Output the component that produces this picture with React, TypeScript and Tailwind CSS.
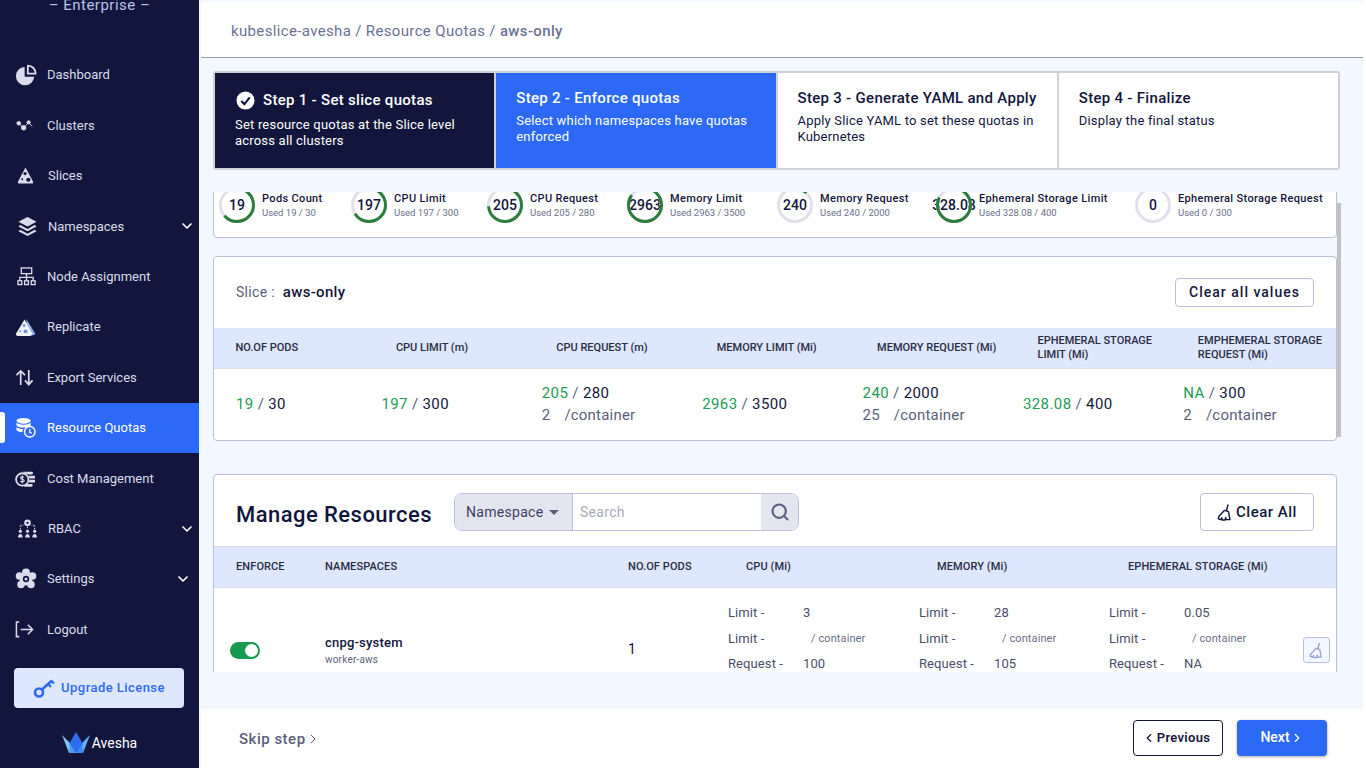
import { ChevronDown, ChevronLeft, ChevronRight, Search } from "lucide-react";

type NavItem = {
  label: string;
  icon: React.ReactNode;
  active?: boolean;
  chevron?: string;
  labelClass?: string;
};

function PieIcon() {
  return (
    <svg viewBox="0 0 24 24" className="w-[22px] h-[22px]" fill="currentColor">
      <path d="M10.5 3.2A10 10 0 1 0 21 14h-10.500Z" />
      <path d="M14 1.800a8.500 8.500 0 0 1 8.500 8.700H14Z" fill="none" stroke="currentColor" strokeWidth="2" strokeLinejoin="round" />
    </svg>
  );
}

function ClusterIcon() {
  return (
    <svg viewBox="0 0 20 12" className="w-[18px] h-[11px] ml-[1px]" fill="currentColor" stroke="currentColor">
      <path d="M3 3 8.500 9 14 2.500 18 7" fill="none" strokeWidth="1" />
      <circle cx="3" cy="3.500" r="2" />
      <circle cx="8.500" cy="8.500" r="2.500" />
      <circle cx="14" cy="2.500" r="1.800" />
    </svg>
  );
}

function SliceIcon() {
  return (
    <svg viewBox="0 0 20 20" className="w-[19px] h-[19px] ml-[1px]">
      <path d="M10 1.500 18 16.500Q18.500 18.500 16.500 18.500H3.500Q1.500 18.500 2 16.500Z" fill="currentColor" />
      <circle cx="9.500" cy="8" r="1.700" fill="#12163c" />
      <circle cx="13" cy="14.500" r="2.200" fill="#12163c" />
      <circle cx="6.500" cy="14" r="1" fill="#12163c" />
    </svg>
  );
}

function LayersIcon() {
  return (
    <svg viewBox="0 0 22 22" className="w-[21px] h-[21px] ml-[2px]" fill="currentColor">
      <path d="M11 1 20.500 6 11 11 1.500 6Z" />
      <path d="M3.500 9.500 1.500 11 11 16 20.500 11 18.500 9.500 11 13.500Z" />
      <path d="M3.500 14.500 1.500 16 11 21 20.500 16 18.500 14.500 11 18.500Z" />
    </svg>
  );
}

function NodeIcon() {
  return (
    <svg viewBox="0 0 20 20" className="w-[19px] h-[19px] ml-[2px]" fill="none" stroke="currentColor" strokeWidth="1.400">
      <rect x="4.500" y="1" width="11" height="6" />
      <path d="M10 7v4M3 14v-3h14v3M10 11v3" />
      <rect x="1" y="14.500" width="4" height="4" />
      <rect x="8" y="14.500" width="4" height="4" />
      <rect x="15" y="14.500" width="4" height="4" />
    </svg>
  );
}

function ReplicateIcon() {
  return (
    <svg viewBox="0 0 22 22" className="w-[21px] h-[21px]">
      <path d="M12 2 21 17Q21 19 19 19H12Z" fill="#8fa8e8" />
      <path d="M10 2.500 18 17Q18.500 19.500 15 20H3Q0.500 19.500 1 17.500Z" fill="#f2f4fb" />
      <circle cx="9.500" cy="9" r="1.500" fill="#6d8fe8" />
      <circle cx="11" cy="15" r="2" fill="#6d8fe8" />
      <circle cx="5.500" cy="15" r="1" fill="#6d8fe8" />
    </svg>
  );
}

function ExportIcon() {
  return (
    <svg viewBox="0 0 20 20" className="w-[19px] h-[19px]" fill="none" stroke="currentColor" strokeWidth="1.800">
      <path d="M6 18V3M1.500 7.500 6 3l4.500 4.500M14.500 2v15M10.500 13l4 4.500 4-4.500" />
    </svg>
  );
}

function QuotaIcon() {
  return (
    <svg viewBox="0 0 22 22" className="w-[21px] h-[21px]" fill="currentColor">
      <ellipse cx="9" cy="4" rx="7.500" ry="3" />
      <path d="M1.500 6v2c0 1.700 3.400 3 7.500 3s7.500-1.300 7.500-3V6c-1.500 1.400-4.300 2-7.500 2S3 7.400 1.500 6Z" />
      <path d="M1.500 10.500v2.500c0 1.500 2.700 2.600 6 2.900.2-1.200.8-2.300 1.500-3.100-3.200 0-6-.9-7.500-2.300Z" />
      <circle cx="15.500" cy="15.500" r="5.500" fill="#2b69f6" stroke="currentColor" strokeWidth="1.500" />
      <path d="M15.500 12.500v3.500l2.200 1" fill="none" stroke="currentColor" strokeWidth="1.300" />
    </svg>
  );
}

function CostIcon() {
  return (
    <svg viewBox="0 0 22 18" className="w-[20px] h-[17px]" fill="currentColor">
      <path d="M8 1.500h11a2 2 0 0 1 0 3h-4ZM15 6h6.500a1.500 1.500 0 0 1 0 3H16ZM16 10.500h5a1.500 1.500 0 0 1 0 3h-6ZM12 15h6a1.500 1.500 0 0 1 0 3h-8Z" />
      <circle cx="8" cy="10" r="6.800" fill="#12163c" stroke="currentColor" strokeWidth="2" />
      <path d="M10 7.800C9.500 6.800 6 6.500 6 8.300c0 2 4.200 1.200 4.200 3.300 0 1.800-3.700 1.600-4.300.5M8 5.500v9" fill="none" stroke="currentColor" strokeWidth="1.200" />
    </svg>
  );
}

function RbacIcon() {
  return (
    <svg viewBox="0 0 22 22" className="w-[21px] h-[21px] ml-[2px]" fill="currentColor">
      <circle cx="11" cy="5" r="3.500" />
      <circle cx="11" cy="5" r="1.200" fill="#12163c" />
      <path d="M3.500 12V7.500H7M18.500 12V7.500H15M11 9v3" fill="none" stroke="currentColor" strokeWidth="1" strokeDasharray="1.500 1" />
      <circle cx="3.500" cy="14" r="1.700" />
      <circle cx="11" cy="14" r="1.700" />
      <circle cx="18.500" cy="14" r="1.700" />
      <path d="M1 20.500c0-5 5-5 5 0ZM8.500 20.500c0-5 5-5 5 0ZM16 20.500c0-5 5-5 5 0Z" />
    </svg>
  );
}

function SettingsIcon() {
  return (
    <svg viewBox="0 0 22 22" className="w-[22px] h-[22px]" fill="currentColor">
      <circle cx="11" cy="4.500" r="4" />
      <circle cx="4.500" cy="8" r="3.800" />
      <circle cx="17.500" cy="8" r="3.800" />
      <circle cx="6" cy="16.500" r="3.800" />
      <circle cx="16" cy="16.500" r="3.800" />
      <circle cx="11" cy="11" r="6.500" />
      <circle cx="11" cy="11" r="3.200" fill="#12163c" />
      <circle cx="11" cy="11" r="1.500" />
    </svg>
  );
}

function LogoutIcon() {
  return (
    <svg viewBox="0 0 20 20" className="w-[19px] h-[19px]" fill="none" stroke="currentColor" strokeWidth="1.600">
      <path d="M4.500 2H1.500v15.500h3M6 10h12.500M13.500 5l5 5-5 5" />
    </svg>
  );
}

function KeyIcon() {
  return (
    <svg viewBox="0 0 22 22" className="w-[22px] h-[22px] text-[#2b69f6]" fill="none" stroke="currentColor">
      <circle cx="6" cy="15.500" r="4" strokeWidth="2.600" />
      <path d="M9 12.500 19 3.500" strokeWidth="2.600" />
      <path d="M15 7l3 3M18.500 4l2.500 2.500" strokeWidth="2.400" />
    </svg>
  );
}

function BroomIcon({ className }: { className: string }) {
  return (
    <svg viewBox="0 0 18 20" className={className} fill="none" stroke="currentColor" strokeWidth="1.600" strokeLinejoin="round">
      <path d="M12.500 1 10.500 8" />
      <path d="M8.500 7.500 13 9l1.500 9H9" />
      <path d="M8.500 7.500 2 14.500 1.500 17l3 1 1-2 0 2.500H9l1-3 0 3" />
    </svg>
  );
}

function AveshaCrown() {
  return (
    <svg viewBox="0 0 28 21" className="w-[28px] h-[21px]">
      <path d="M0 3 7 21H14L8 11Z" fill="#7fc4f5" />
      <path d="M28 3 21 21H14L20 11Z" fill="#5fb0f5" />
      <path d="M14 0 7 12 14 21 21 12Z" fill="#2e6df0" />
      <path d="M8 12 14 21H7Z" fill="#4d9cf0" />
      <path d="M20 12 14 21H21Z" fill="#3c86ee" />
    </svg>
  );
}

const navItems: NavItem[] = [
  { label: "Dashboard", icon: <PieIcon /> },
  { label: "Clusters", icon: <ClusterIcon /> },
  { label: "Slices", icon: <SliceIcon />, labelClass: "ml-[1px]" },
  { label: "Namespaces", icon: <LayersIcon />, labelClass: "ml-[1px]", chevron: "mr-[3px]" },
  { label: "Node Assignment", icon: <NodeIcon /> },
  { label: "Replicate", icon: <ReplicateIcon /> },
  { label: "Export Services", icon: <ExportIcon /> },
  { label: "Resource Quotas", icon: <QuotaIcon />, active: true },
  { label: "Cost Management", icon: <CostIcon /> },
  { label: "RBAC", icon: <RbacIcon />, labelClass: "ml-[1px]", chevron: "mr-[3px]" },
  { label: "Settings", icon: <SettingsIcon />, chevron: "mr-[7px]" },
  { label: "Logout", icon: <LogoutIcon /> },
];

const steps = [
  {
    title: "Step 1 - Set slice quotas",
    text: ["Set resource quotas at the Slice level", "across all clusters"],
    className: "bg-[#12163c] text-white",
    done: true,
  },
  {
    title: "Step 2 - Enforce quotas",
    text: ["Select which namespaces have quotas", "enforced"],
    className: "bg-[#2b69f6] text-white",
  },
  {
    title: "Step 3 - Generate YAML and Apply",
    text: ["Apply Slice YAML to set these quotas in", "Kubernetes"],
    className: "bg-white text-[#12163c]",
  },
  {
    title: "Step 4 - Finalize",
    text: ["Display the final status"],
    className: "bg-white text-[#12163c]",
  },
];

const stats = [
  { value: "19", pct: 19 / 30, label: "Pods Count", used: "Used 19 / 30" },
  { value: "197", pct: 197 / 300, label: "CPU Limit", used: "Used 197 / 300" },
  { value: "205", pct: 205 / 280, label: "CPU Request", used: "Used 205 / 280" },
  { value: "2963", pct: 2963 / 3500, label: "Memory Limit", used: "Used 2963 / 3500" },
  { value: "240", pct: 240 / 2000, label: "Memory Request", used: "Used 240 / 2000" },
  { value: "328.08", pct: 328.08 / 400, label: "Ephemeral Storage Limit", used: "Used 328.08 / 400" },
  { value: "0", pct: 0, label: "Ephemeral Storage Request", used: "Used 0 / 300" },
];

const quotaHeaders = [
  ["NO.OF PODS"],
  ["CPU LIMIT (m)"],
  ["CPU REQUEST (m)"],
  ["MEMORY LIMIT (Mi)"],
  ["MEMORY REQUEST (Mi)"],
  ["EPHEMERAL STORAGE", "LIMIT (Mi)"],
  ["EMPHEMERAL STORAGE", "REQUEST (Mi)"],
];

const quotaValues = [
  { used: "19", total: "30" },
  { used: "197", total: "300" },
  { used: "205", total: "280", perContainer: "2" },
  { used: "2963", total: "3500" },
  { used: "240", total: "2000", perContainer: "25" },
  { used: "328.08", total: "400" },
  { used: "NA", total: "300", perContainer: "2" },
];

const resourceColumns = [
  { limit: "3", request: "100" },
  { limit: "28", request: "105" },
  { limit: "0.05", request: "NA" },
];

function StatRing({ value, pct }: { value: string; pct: number }) {
  const circumference = 2 * Math.PI * 16.5;
  return (
    <div className="w-9 h-9 shrink-0 grid grid-cols-[36px] grid-rows-[36px] place-items-center">
      <svg viewBox="0 0 36 36" className="w-9 h-9 col-start-1 row-start-1 -rotate-90">
        <circle cx="18" cy="18" r="16.500" fill="none" stroke="#dfe0ea" strokeWidth="3" />
        <circle
          cx="18"
          cy="18"
          r="16.500"
          fill="none"
          stroke="#2a7d3a"
          strokeWidth="3"
          strokeDasharray={`${pct * circumference} ${circumference}`}
        />
      </svg>
      <span className="col-start-1 row-start-1 text-[14px] font-medium text-[#12163c] whitespace-nowrap">
        {value}
      </span>
    </div>
  );
}

function Sidebar() {
  return (
    <aside className="w-[199px] h-[768px] shrink-0 bg-[#12163c] flex flex-col overflow-hidden">
      <p className="h-[50px] -mt-[6px] mb-[6px] text-center text-[15px] tracking-[0.5px] text-[#b9c3e6]">
        – Enterprise –
      </p>
      <nav className="flex flex-col">
        {navItems.map((item) => (
          <div
            key={item.label}
            className={`h-[50.4px] flex items-center pr-[1px] ${item.active ? "bg-[#2b69f6] text-white" : "text-[#d9dcea]"}`}
          >
            <div className={`w-[5px] h-[31px] rounded-r-[3px] ${item.active ? "bg-white" : ""}`} />
            <div className="w-[42px] pl-[10px] shrink-0 flex items-center">{item.icon}</div>
            <span className={`text-[13px] flex-1 ${item.labelClass ?? ""}`}>{item.label}</span>
            {item.chevron && <ChevronDown className={`w-4 h-4 text-white ${item.chevron}`} strokeWidth={2.5} />}
          </div>
        ))}
      </nav>
      <button className="mx-[14px] mt-[13px] h-10 w-[170px] rounded-[4px] bg-[#dde7fd] flex items-center justify-center gap-[6px] text-[13px] font-medium tracking-[0.45px] text-[#2b69f6]">
        <KeyIcon />
        Upgrade License
      </button>
      <div className="mt-[23px] flex items-center justify-center gap-[2px] text-white text-[14px]">
        <AveshaCrown />
        <span className="pt-[2px]">Avesha</span>
      </div>
    </aside>
  );
}

function Stepper() {
  return (
    <div className="ml-[14px] w-[1127px] h-[99px] border-2 border-[#cfd0d6] rounded-[3px] bg-[#cfd0d6] grid grid-cols-4 gap-[2px]">
      {steps.map((step) => (
        <div key={step.title} className={`${step.className} pl-[20px] ${step.done ? "pt-[17px]" : "pt-[15px]"}`}>
          <div className="flex items-center gap-[8px] h-[20px]">
            {step.done && (
              <svg viewBox="0 0 20 20" className="w-[19px] h-[19px] ml-[1px]">
                <circle cx="10" cy="10" r="9.500" fill="white" />
                <path d="M5.500 10.500 8.800 13.800 14.500 6.800" fill="none" stroke="#12163c" strokeWidth="2.200" />
              </svg>
            )}
            <h3 className="text-[15px] font-medium tracking-[0.3px] whitespace-nowrap">{step.title}</h3>
          </div>
          <div className={`text-[13px] leading-[16px] tracking-[0.2px] ${step.done ? "mt-[7px]" : "mt-[5px]"}`}>
            {step.text.map((line) => (
              <p key={line} className="whitespace-nowrap">{line}</p>
            ))}
          </div>
        </div>
      ))}
    </div>
  );
}

function StatsCard() {
  return (
    <section className="-mt-[20px] h-[66px] bg-white border border-[#bcbedd] rounded-[4px] pt-[14px] pl-[5px] grid grid-cols-[132px_136px_140px_150px_159px_199px_1fr]">
      {stats.map((stat) => (
        <div key={stat.label} className="flex items-center gap-[7px] h-9">
          <StatRing value={stat.value} pct={stat.pct} />
          <div className="mt-[2px] whitespace-nowrap">
            <p className="text-[11px] leading-[14px] font-medium tracking-[0.35px] text-[#12163c]">{stat.label}</p>
            <p className="text-[9.500px] leading-[14px] text-[#6a6e8a]">{stat.used}</p>
          </div>
        </div>
      ))}
    </section>
  );
}

function QuotaCard() {
  return (
    <section className="mt-[18px] h-[185px] bg-white border border-[#bcbedd] rounded-[4px] overflow-hidden">
      <div className="h-[71px] flex items-center justify-between pl-[22px] pr-[22px] pb-[1px]">
        <p className="text-[#5b5f7b] text-[14px] tracking-[0.3px]">
          Slice :<span className="ml-[8px] text-[15px] font-medium text-[#12163c]">aws-only</span>
        </p>
        <button className="w-[139px] h-[29px] border border-[#bcbedd] rounded-[4px] text-[14px] font-medium tracking-[1px] text-[#12163c]">
          Clear all values
        </button>
      </div>
      <div className="h-[41px] bg-[#dde7fd] border-b border-[#d9dce6] pl-[7px] grid grid-cols-[repeat(7,160.400px)] items-center">
        {quotaHeaders.map((lines) => (
          <div key={lines[0]} className="pl-[14.500px] text-[11px] leading-[14px] font-medium text-[#2a2c44] whitespace-nowrap">
            {lines.map((line) => (
              <p key={line}>{line}</p>
            ))}
          </div>
        ))}
      </div>
      <div className="h-[69px] pl-[7px] grid grid-cols-[repeat(7,160.400px)] items-center text-[15px]">
        {quotaValues.map((value, i) => (
          <div key={value.used + value.total} className={i === 0 ? "pl-[15px]" : ""}>
            <p className="leading-[22px] whitespace-nowrap tracking-[0.4px]">
              <span className="text-[#1c9c53]">{value.used}</span>
              <span className="text-[#5b5f7b] mx-[4px]">/</span>
              <span className="text-[#12163c]">{value.total}</span>
            </p>
            {value.perContainer && (
              <p className="leading-[22px] text-[#5b5f7b] tracking-[0.2px]">
                <span className="mr-[14px]">{value.perContainer}</span>
                /container
              </p>
            )}
          </div>
        ))}
      </div>
    </section>
  );
}

function ResourceCell({ limit, request }: { limit: string; request: string }) {
  return (
    <div className="text-[13px] leading-[25.500px] text-[#4a4e6a] tracking-[0.1px]">
      <div className="flex">
        <span className="w-[75px]">Limit -</span>
        {limit}
      </div>
      <div className="flex items-center">
        <span className="w-[83px]">Limit -</span>
        <span className="text-[11px] text-[#6a6e8a]">/ container</span>
      </div>
      <div className="flex">
        <span className="w-[75px]">Request -</span>
        {request}
      </div>
    </div>
  );
}

function ResourcesCard() {
  return (
    <section className="mt-[33px] bg-white border border-[#bcbedd] rounded-t-[4px] h-[230px]">
      <div className="h-[71px] flex items-center pl-[22px] pr-[22px] pt-[3px]">
        <h2 className="mt-[5px] text-[22px] font-medium text-[#12163c] tracking-[0.45px] w-[218px] whitespace-nowrap">
          Manage Resources
        </h2>
        <div className="flex w-[345px] h-[38px] border border-[#bcbedd] rounded-[8px] overflow-hidden text-[14px]">
          <div className="w-[118px] bg-[#e3e5f1] border-r border-[#bcbedd] flex items-center gap-[6px] pl-[11px] text-[#3d4060] tracking-[0.3px]">
            Namespace
            <span className="w-0 h-0 border-x-[5px] border-x-transparent border-t-[5px] border-t-[#5b5f7b]" />
          </div>
          <div className="flex-1 flex items-center pl-[7px] text-[#a9abb8] tracking-[0.3px]">Search</div>
          <div className="w-[37px] bg-[#e3e5f1] grid place-items-center">
            <Search className="w-5 h-5 text-[#5b5f7b]" strokeWidth={2.5} />
          </div>
        </div>
        <button className="ml-auto w-[114px] h-[38px] border border-[#bcbedd] rounded-[4px] flex items-center justify-center gap-[3px] text-[15px] font-medium tracking-[0.5px] text-[#12163c]">
          <BroomIcon className="w-[16px] h-[19px]" />
          Clear All
        </button>
      </div>
      <div className="h-[42px] bg-[#dde7fd] border-y border-[#d9dce6] pl-[22px] grid grid-cols-[89px_303px_100px_191px_190px_1fr] items-center text-[11px] font-medium tracking-[0.1px] text-[#2a2c44]">
        <span>ENFORCE</span>
        <span>NAMESPACES</span>
        <span>NO.OF PODS</span>
        <span className="pl-[18px]">CPU (Mi)</span>
        <span className="pl-[18px]">MEMORY (Mi)</span>
        <span className="pl-[19px]">EPHEMERAL STORAGE (Mi)</span>
      </div>
      <div className="pl-[22px] pt-[12px] grid grid-cols-[89px_303px_100px_191px_190px_194px_27px] items-start">
        <div className="mt-[42px] -ml-[6px] w-[30px] h-[17px] rounded-full bg-[#169a4f] flex items-center justify-end pr-[2px]">
          <div className="w-[13px] h-[13px] rounded-full bg-white" />
        </div>
        <div className="mt-[35px]">
          <p className="text-[13px] leading-[16px] font-medium tracking-[0.2px] text-[#12163c]">cnpg-system</p>
          <p className="text-[10px] leading-[14px] mt-[2px] tracking-[0.2px] text-[#5b5f7b]">worker-aws</p>
        </div>
        <span className="mt-[39px] text-[14px] leading-[20px] text-[#12163c]">1</span>
        {resourceColumns.map((column) => (
          <ResourceCell key={column.limit} limit={column.limit} request={column.request} />
        ))}
        <button className="mt-[37px] w-[27px] h-[26px] border border-[#bcbedd] bg-[#f3f7ff] rounded-[3px] grid place-items-center text-[#9a9ed0]">
          <BroomIcon className="w-[15px] h-[17px]" />
        </button>
      </div>
    </section>
  );
}

export default function App() {
  return (
    <div className="w-[1366px] h-[779px] bg-white flex overflow-hidden font-['Roboto',sans-serif]">
      <Sidebar />
      <main className="w-[1164px] h-[768px] bg-[#f3f7ff] flex flex-col">
        <header className="mt-[2px] ml-[2px] h-[56px] bg-white border-b border-[#9a9aa8] flex items-center pl-[30px] pt-[3px] text-[15px] tracking-[0.35px] text-[#6b7194]">
          kubeslice-avesha / Resource Quotas / <span className="ml-[4px] font-medium">aws-only</span>
        </header>
        <div className="pt-[13px]">
          <Stepper />
        </div>
        <div className="mt-[22px] ml-[14px] h-[480px] flex overflow-hidden">
          <div className="w-[1124px]">
            <StatsCard />
            <QuotaCard />
            <ResourcesCard />
          </div>
          <div className="w-[4px] h-[234px] mt-[11px] bg-[#c1c1c1]" />
        </div>
        <footer className="mt-[37px] ml-[2px] flex-1 bg-white flex items-center pl-[38px] pr-[36px] pb-[2px]">
          <span className="flex items-center pt-[3px] text-[15px] font-medium tracking-[0.5px] text-[#5b5f7b]">
            Skip step
            <ChevronRight className="w-[16px] h-[20px] -ml-[1px]" strokeWidth={1.5} />
          </span>
          <button className="ml-auto w-[90px] h-[36px] border border-[#12163c] rounded-[4px] flex items-center justify-center gap-[1px] text-[13px] font-semibold tracking-[0.3px] text-[#12163c]">
            <ChevronLeft className="w-[14px] h-[14px] -ml-[4px]" strokeWidth={2} />
            Previous
          </button>
          <button className="ml-[14px] w-[90px] h-[36px] rounded-[4px] bg-[#2b69f6] shadow-[0_1px_3px_rgba(0,0,0,0.35)] flex items-center justify-center text-[14px] font-medium text-white">
            Next
            <ChevronRight className="w-[14px] h-[14px]" strokeWidth={2} />
          </button>
        </footer>
      </main>
    </div>
  );
}
